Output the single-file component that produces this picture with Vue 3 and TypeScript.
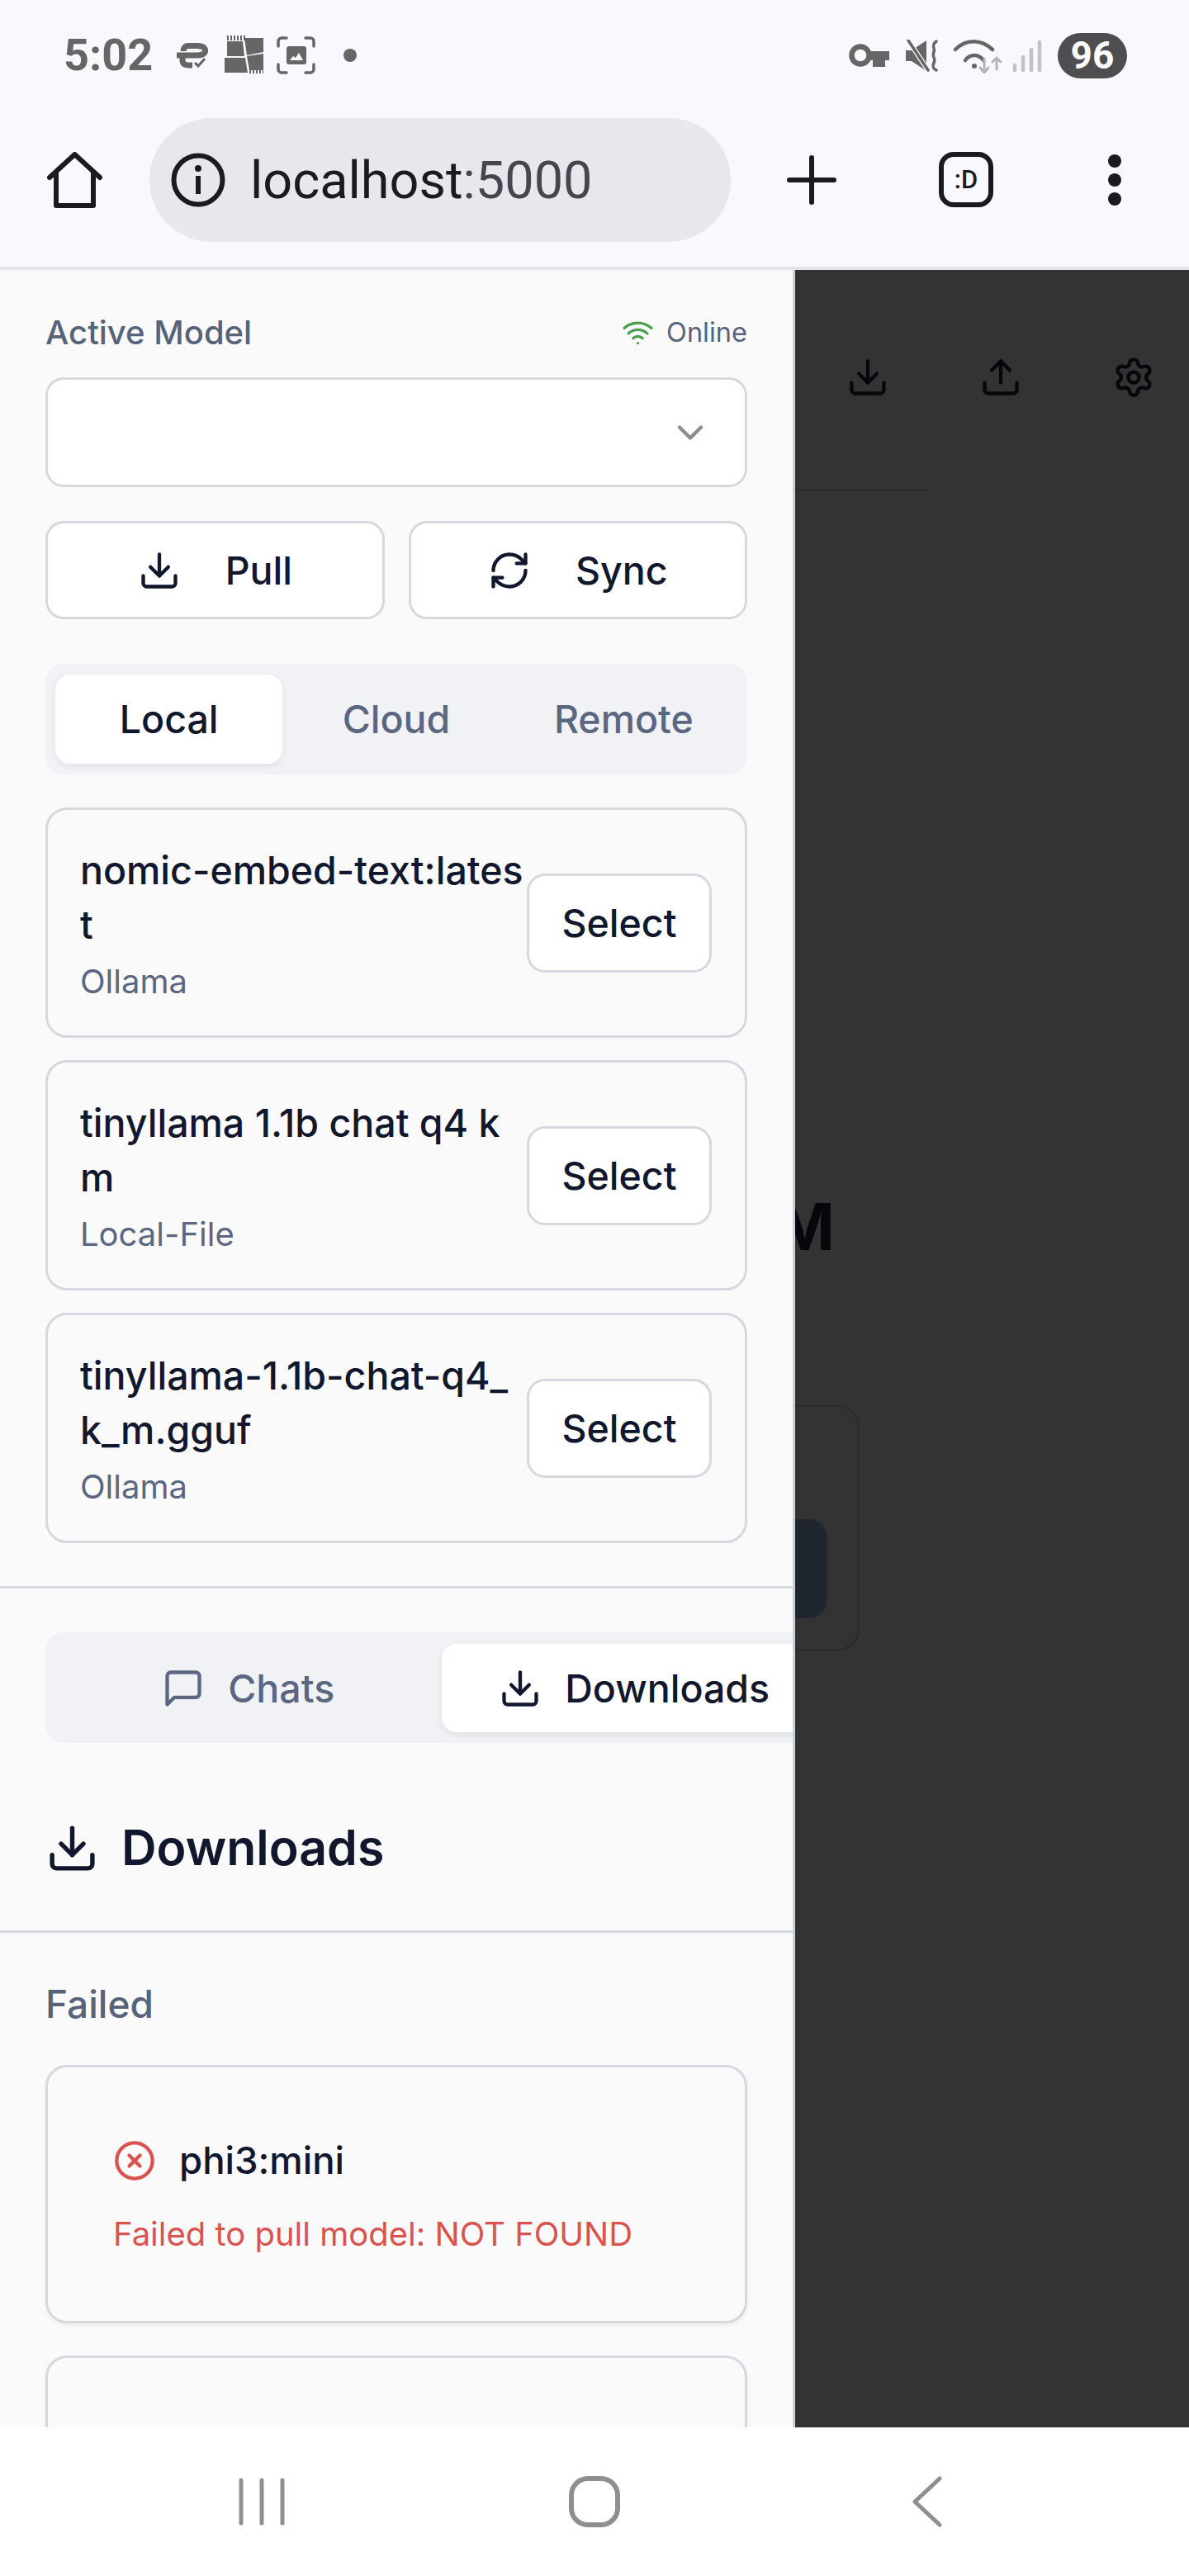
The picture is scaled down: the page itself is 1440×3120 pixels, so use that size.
<script setup lang="ts">
interface Model {
  name: string;
  source: string;
}

const models: Model[] = [
  { name: 'nomic-embed-text:latest', source: 'Ollama' },
  { name: 'tinyllama 1.1b chat q4 k m', source: 'Local-File' },
  { name: 'tinyllama-1.1b-chat-q4_k_m.gguf', source: 'Ollama' },
];

const sourceTabs = ['Local', 'Cloud', 'Remote'];
const activeSource = 'Local';
</script>

<template>
  <div class="phone">
    <div class="status-bar">
      <div class="status-left">
        <span class="time">5:02</span>
        <svg class="st-sync" viewBox="0 0 39 31" fill="none" stroke="#666" stroke-width="7">
          <path d="M1 15H26C34 15 37 11 35 7C33 3 27 3.500 23 3.500H15C11 3.500 9 6 9 10" />
          <path d="M8 17V21C8 26 12 27 15 27H20" />
          <path d="M23 24l4 4 8-9" stroke-width="3" />
        </svg>
        <svg class="st-cloth" viewBox="0 0 47 48" fill="#666">
          <path d="M3 7H22L24 25H3Z" />
          <path d="M24 3H47V20L27 24Z" />
          <path d="M0 27H25L28 45H0Z" />
          <path d="M27 25L47 22V42H30Z" />
          <path d="M3 3H26M30 43H47M1 27V45M44 4V20" fill="none" stroke="#666" stroke-width="6" stroke-dasharray="2 2" />
        </svg>
        <svg class="st-capture" viewBox="0 0 47 46" fill="none" stroke="#666" stroke-width="3.5" stroke-linecap="round">
          <path d="M2 12V6a4 4 0 0 1 4-4h6M35 2h6a4 4 0 0 1 4 4v6M45 34v6a4 4 0 0 1-4 4h-6M12 44H6a4 4 0 0 1-4-4v-6" />
          <rect x="12" y="12" width="24" height="22" rx="3" fill="#666" stroke="none" />
          <path d="M16 29l4-5 3 2 4-6 5 9z" fill="#faf8ff" stroke="none" />
        </svg>
        <span class="st-dot"></span>
      </div>
      <div class="status-right">
        <svg class="st-key" viewBox="0 0 49 29" fill="#666">
          <circle cx="14" cy="14" r="10.5" fill="none" stroke="#666" stroke-width="6.5" />
          <path d="M23 9H49V20H44V28H29V20H23Z" />
        </svg>
        <svg class="st-mute" viewBox="0 0 39 39" fill="none" stroke="#666" stroke-linecap="round">
          <path d="M0 13H7L25 1V38L7 26H0Z" fill="#666" stroke="none" stroke-linejoin="round" />
          <path d="M3 1L27 37" stroke="#faf8ff" stroke-width="6" />
          <path d="M3 1L27 37" stroke-width="3.5" />
          <path d="M37 2C30 7 36 11 34 15C31 20 37 23 34 28C32 33 33 35 37 37" stroke-width="3.5" />
        </svg>
        <svg class="st-wifi" viewBox="0 0 58 43" fill="none" stroke="#666" stroke-width="4.5" stroke-linecap="round">
          <path d="M2 14C15 1 33 1 47 14" />
          <path d="M14 27C20 19 30 19 36 27" />
          <circle cx="25" cy="34" r="3" fill="#666" stroke="none" />
          <path d="M37 25V41M32 36l5 6 5-6" stroke="#b5b5b8" stroke-width="3" />
          <path d="M52 38V24M47 29l5-5 5 5" stroke="#b5b5b8" stroke-width="3" />
        </svg>
        <svg class="st-signal" viewBox="0 0 36 39" fill="none" stroke="#c2c2c6" stroke-width="4.5" stroke-linecap="round">
          <path d="M3 31V37M13 21V37M23 12V37M33 3V37" />
        </svg>
        <span class="battery">96</span>
      </div>
    </div>

    <div class="toolbar">
      <svg class="tb-home" viewBox="0 0 67 68" fill="none" stroke="#1a1b20" stroke-width="6" stroke-linejoin="round" stroke-linecap="round">
        <path d="M3 31L33.5 3L64 31" />
        <path d="M11 25V65H56V25" />
      </svg>
      <div class="url-pill">
        <svg class="tb-info" viewBox="0 0 66 66" fill="none" stroke="#1a1b20" stroke-width="6">
          <circle cx="33" cy="33" r="29.5" />
          <path d="M33 28V50" />
          <circle cx="33" cy="19" r="4" fill="#1a1b20" stroke="none" />
        </svg>
        <span class="url"><span class="url-host">localhost</span>:5000</span>
      </div>
      <svg class="tb-plus" viewBox="0 0 60 60" fill="none" stroke="#1a1b20" stroke-width="6" stroke-linecap="round">
        <path d="M30 3V57M3 30H57" />
      </svg>
      <div class="tb-tabs">:D</div>
      <div class="tb-menu">
        <span></span>
        <span></span>
        <span></span>
      </div>
    </div>

    <div class="main">
      <aside class="drawer">
        <section class="model-section">
          <div class="model-head">
            <span class="model-label">Active Model</span>
            <span class="online">
              <svg class="icon-online" viewBox="0 0 24 24" fill="none" stroke="#4a9f4f" stroke-width="2" stroke-linecap="round" stroke-linejoin="round">
                <path d="M12 20h.01" />
                <path d="M2 8.82a15 15 0 0 1 20 0" />
                <path d="M5 12.859a10 10 0 0 1 14 0" />
                <path d="M8.5 16.429a5 5 0 0 1 7 0" />
              </svg>
              Online
            </span>
          </div>

          <div class="model-select">
            <svg class="chevron" viewBox="0 0 24 24" fill="none" stroke="#8b8d93" stroke-width="2" stroke-linecap="round" stroke-linejoin="round">
              <path d="m6 9 6 6 6-6" />
            </svg>
          </div>

          <div class="action-row">
            <button class="action-btn">
              <svg class="icon" viewBox="0 0 24 24" fill="none" stroke="currentColor" stroke-width="2" stroke-linecap="round" stroke-linejoin="round">
                <path d="M21 15v4a2 2 0 0 1-2 2H5a2 2 0 0 1-2-2v-4" />
                <polyline points="7 10 12 15 17 10" />
                <line x1="12" y1="15" x2="12" y2="3" />
              </svg>
              Pull
            </button>
            <button class="action-btn">
              <svg class="icon" viewBox="0 0 24 24" fill="none" stroke="currentColor" stroke-width="2" stroke-linecap="round" stroke-linejoin="round">
                <path d="M3 12a9 9 0 0 1 9-9 9.75 9.75 0 0 1 6.74 2.74L21 8" />
                <path d="M21 3v5h-5" />
                <path d="M21 12a9 9 0 0 1-9 9 9.75 9.75 0 0 1-6.74-2.74L3 16" />
                <path d="M8 16H3v5" />
              </svg>
              Sync
            </button>
          </div>

          <div class="source-tabs">
            <div
              v-for="tab in sourceTabs"
              :key="tab"
              class="source-tab"
              :class="{ active: tab === activeSource }"
            >
              {{ tab }}
            </div>
          </div>

          <div class="model-list">
            <div v-for="model in models" :key="model.name" class="model-card">
              <div class="model-info">
                <div class="model-name">{{ model.name }}</div>
                <div class="model-source">{{ model.source }}</div>
              </div>
              <button class="select-btn">Select</button>
            </div>
          </div>
        </section>

        <div class="view-tabs">
          <div class="view-tab">
            <svg class="icon" viewBox="0 0 24 24" fill="none" stroke="currentColor" stroke-width="2" stroke-linecap="round" stroke-linejoin="round">
              <path d="M21 15a2 2 0 0 1-2 2H7l-4 4V5a2 2 0 0 1 2-2h14a2 2 0 0 1 2 2z" />
            </svg>
            Chats
          </div>
          <div class="view-tab active">
            <svg class="icon" viewBox="0 0 24 24" fill="none" stroke="currentColor" stroke-width="2" stroke-linecap="round" stroke-linejoin="round">
              <path d="M21 15v4a2 2 0 0 1-2 2H5a2 2 0 0 1-2-2v-4" />
              <polyline points="7 10 12 15 17 10" />
              <line x1="12" y1="15" x2="12" y2="3" />
            </svg>
            Downloads
          </div>
        </div>

        <h2 class="downloads-title">
          <svg class="icon-title" viewBox="0 0 24 24" fill="none" stroke="currentColor" stroke-width="2" stroke-linecap="round" stroke-linejoin="round">
            <path d="M21 15v4a2 2 0 0 1-2 2H5a2 2 0 0 1-2-2v-4" />
            <polyline points="7 10 12 15 17 10" />
            <line x1="12" y1="15" x2="12" y2="3" />
          </svg>
          Downloads
        </h2>

        <section class="failed-section">
          <div class="failed-label">Failed</div>
          <div class="failed-card">
            <div class="failed-name">
              <svg class="icon" viewBox="0 0 24 24" fill="none" stroke="#d9534f" stroke-width="2" stroke-linecap="round" stroke-linejoin="round">
                <circle cx="12" cy="12" r="10" />
                <path d="m15 9-6 6" />
                <path d="m9 9 6 6" />
              </svg>
              phi3:mini
            </div>
            <div class="failed-error">Failed to pull model: NOT FOUND</div>
          </div>
          <div class="failed-card next"></div>
        </section>
      </aside>

      <div class="backdrop">
        <div class="page-actions">
          <svg class="icon" viewBox="0 0 24 24" fill="none" stroke="currentColor" stroke-width="2" stroke-linecap="round" stroke-linejoin="round">
            <path d="M21 15v4a2 2 0 0 1-2 2H5a2 2 0 0 1-2-2v-4" />
            <polyline points="7 10 12 15 17 10" />
            <line x1="12" y1="15" x2="12" y2="3" />
          </svg>
          <svg class="icon" viewBox="0 0 24 24" fill="none" stroke="currentColor" stroke-width="2" stroke-linecap="round" stroke-linejoin="round">
            <path d="M21 15v4a2 2 0 0 1-2 2H5a2 2 0 0 1-2-2v-4" />
            <polyline points="17 8 12 3 7 8" />
            <line x1="12" y1="3" x2="12" y2="15" />
          </svg>
          <svg class="icon" viewBox="0 0 24 24" fill="none" stroke="currentColor" stroke-width="2" stroke-linecap="round" stroke-linejoin="round">
            <path d="M9.671 4.136a2.34 2.34 0 0 1 4.659 0 2.34 2.34 0 0 0 3.319 1.915 2.34 2.34 0 0 1 2.33 4.033 2.34 2.34 0 0 0 0 3.831 2.34 2.34 0 0 1-2.33 4.033 2.34 2.34 0 0 0-3.319 1.915 2.34 2.34 0 0 1-4.659 0 2.34 2.34 0 0 0-3.32-1.915 2.34 2.34 0 0 1-2.33-4.033 2.34 2.34 0 0 0 0-3.831A2.34 2.34 0 0 1 6.35 6.051a2.34 2.34 0 0 0 3.32-1.915" />
            <circle cx="12" cy="12" r="3" />
          </svg>
        </div>
        <div class="page-rule"></div>
        <h1 class="page-title">LLM</h1>
        <div class="page-card">
          <div class="page-button"></div>
        </div>
      </div>
    </div>

    <div class="nav-bar">
      <svg class="nav-recents" viewBox="0 0 56 58" fill="none" stroke="#8f8f8f" stroke-width="5" stroke-linecap="round">
        <path d="M3 3V55M28 3V55M53 3V55" />
      </svg>
      <svg class="nav-home" viewBox="0 0 62 62" fill="none" stroke="#8f8f8f" stroke-width="6">
        <rect x="3" y="3" width="56" height="56" rx="20" />
      </svg>
      <svg class="nav-back" viewBox="0 0 36 62" fill="none" stroke="#8f8f8f" stroke-width="5" stroke-linecap="round" stroke-linejoin="round">
        <path d="M33 3L3 31L33 59" />
      </svg>
    </div>
  </div>
</template>

<style scoped>
.phone {
  width: 1440px;
  height: 3120px;
  display: flex;
  flex-direction: column;
  overflow: hidden;
  background: #faf8ff;
  color: #11172c;
  font-family: Inter, "Liberation Sans", sans-serif;
}

.status-bar {
  height: 134px;
  display: flex;
  align-items: center;
  justify-content: space-between;
  padding: 0 75px 0 77px;
  flex-shrink: 0;
}

.status-left,
.status-right {
  display: flex;
  align-items: center;
}

.time {
  font-family: Roboto, sans-serif;
  font-size: 54px;
  font-weight: 700;
  color: #666;
  width: 107px;
  line-height: 54px;
}

.st-sync { width: 39px; height: 31px; margin-left: 29px; }
.st-cloth { width: 47px; height: 48px; margin-left: 20px; }
.st-capture { width: 47px; height: 46px; margin-left: 16px; }
.st-dot {
  width: 16px;
  height: 16px;
  border-radius: 50%;
  background: #666;
  margin-left: 34px;
}

.st-key { width: 49px; height: 29px; }
.st-mute { width: 39px; height: 39px; margin-left: 20px; }
.st-wifi { width: 58px; height: 43px; margin-left: 19px; }
.st-signal { width: 36px; height: 39px; margin-left: 13px; }

.battery {
  width: 84px;
  height: 55px;
  margin-left: 19px;
  border-radius: 28px;
  background: #4e4e50;
  color: #fff;
  font-family: Roboto, sans-serif;
  font-size: 46px;
  font-weight: 700;
  line-height: 55px;
  text-align: center;
}

.toolbar {
  height: 189px;
  border-bottom: 4px solid #e4e2ea;
  display: flex;
  align-items: flex-start;
  padding-left: 57px;
  flex-shrink: 0;
}

.tb-home { width: 67px; height: 68px; margin-top: 50px; }

.url-pill {
  width: 704px;
  height: 150px;
  margin: 9px 0 0 57px;
  border-radius: 75px;
  background: #e7e7ec;
  display: flex;
  align-items: center;
  padding-left: 26px;
  box-sizing: border-box;
}

.tb-info { width: 66px; height: 66px; }

.url {
  margin-left: 30px;
  font-family: Roboto, sans-serif;
  font-size: 63px;
  color: #46464f;
}

.url-host { color: #1a1b20; }

.tb-plus { width: 60px; height: 60px; margin: 54px 0 0 68px; }

.tb-tabs {
  width: 66px;
  height: 67px;
  margin: 50px 0 0 124px;
  border: 6px solid #1a1b20;
  border-radius: 18px;
  box-sizing: border-box;
  display: flex;
  align-items: center;
  justify-content: center;
  font-family: Roboto, sans-serif;
  font-size: 31px;
  font-weight: 500;
  color: #1a1b20;
}

.tb-menu {
  margin: 53px 0 0 139px;
  display: flex;
  flex-direction: column;
  gap: 7px;
}

.tb-menu span {
  width: 16px;
  height: 16px;
  border-radius: 50%;
  background: #1a1b20;
}

.main {
  flex: 1;
  min-height: 0;
  display: flex;
  overflow: hidden;
}

.drawer {
  width: 963px;
  flex-shrink: 0;
  box-sizing: border-box;
  overflow: hidden;
  background: #fafafa;
  border-right: 3px solid #cdd0d8;
}

.model-section {
  padding: 52px 55px 52px;
  border-bottom: 3px solid #d6d8e0;
}

.model-head {
  height: 46px;
  display: flex;
  align-items: center;
  justify-content: space-between;
}

.model-label {
  font-size: 40px;
  font-weight: 500;
  color: #566378;
}

.online {
  display: flex;
  align-items: center;
  gap: 15px;
  font-size: 32.5px;
  color: #566378;
}

.icon-online { width: 39px; height: 39px; }

.model-select {
  height: 133px;
  margin-top: 32px;
  box-sizing: border-box;
  border: 3px solid #d6d8e0;
  border-radius: 22px;
  background: #fff;
  display: flex;
  align-items: center;
  justify-content: flex-end;
  padding-right: 40px;
}

.chevron { width: 52px; height: 52px; }

.action-row {
  display: flex;
  gap: 29px;
  margin-top: 41px;
}

.action-btn {
  flex: 1;
  height: 119px;
  box-sizing: border-box;
  border: 3px solid #d6d8e0;
  border-radius: 22px;
  background: #fff;
  color: #11172c;
  font-family: inherit;
  font-size: 46.5px;
  font-weight: 500;
  display: flex;
  align-items: center;
  justify-content: center;
  gap: 54px;
}

.icon { width: 52px; height: 52px; flex-shrink: 0; }

.source-tabs {
  height: 134px;
  margin-top: 54px;
  box-sizing: border-box;
  padding: 13px 12px;
  border-radius: 22px;
  background: #f1f2f6;
  display: grid;
  grid-template-columns: repeat(3, 1fr);
}

.source-tab {
  display: flex;
  align-items: center;
  justify-content: center;
  border-radius: 18px;
  font-size: 46.5px;
  font-weight: 500;
  color: #5b6780;
}

.source-tab.active {
  background: #fff;
  color: #11172c;
  box-shadow: 0 3px 8px rgba(15, 23, 42, 0.08);
}

.model-list {
  margin-top: 40px;
  display: flex;
  flex-direction: column;
  gap: 27px;
}

.model-card {
  height: 279px;
  box-sizing: border-box;
  border: 3px solid #d6d8e0;
  border-radius: 26px;
  padding: 0 40px 0 39px;
  display: flex;
  align-items: center;
}

.model-info {
  flex: 1;
  min-width: 0;
}

.model-name {
  font-size: 46.5px;
  font-weight: 500;
  line-height: 66px;
  word-break: break-all;
}

.model-source {
  margin-top: 10px;
  font-size: 40px;
  line-height: 52px;
  color: #5b6780;
}

.select-btn {
  width: 224px;
  height: 120px;
  flex-shrink: 0;
  border: 3px solid #d6d8e0;
  border-radius: 22px;
  background: #fff;
  color: #11172c;
  font-family: inherit;
  font-size: 46.5px;
  font-weight: 500;
}

.view-tabs {
  width: 959px;
  height: 134px;
  margin: 53px 0 0 55px;
  box-sizing: border-box;
  padding: 14px 12px 13px;
  border-radius: 22px;
  background: #f1f2f6;
  display: grid;
  grid-template-columns: 1fr 1fr;
}

.view-tab {
  display: flex;
  align-items: center;
  justify-content: center;
  gap: 28px;
  border-radius: 18px;
  font-size: 46.5px;
  font-weight: 500;
  color: #5b6780;
}

.view-tab.active {
  background: #fff;
  color: #11172c;
  box-shadow: 0 3px 8px rgba(15, 23, 42, 0.08);
}

.downloads-title {
  margin: 0;
  padding: 88px 55px 61px;
  border-bottom: 3px solid #d6d8e0;
  display: flex;
  align-items: center;
  gap: 27px;
  font-size: 59px;
  font-weight: 600;
  line-height: 78px;
}

.icon-title { width: 65px; height: 65px; }

.failed-section { padding: 54px 55px 0; }

.failed-label {
  font-size: 46px;
  font-weight: 500;
  line-height: 65px;
  color: #566378;
}

.failed-card {
  height: 313px;
  margin-top: 41px;
  box-sizing: border-box;
  border: 3px solid #d6d8e0;
  border-radius: 26px;
  padding: 80px 79px 0;
  box-shadow: 0 3px 6px rgba(15, 23, 42, 0.05);
}

.failed-card.next {
  margin-top: 39px;
}

.failed-name {
  display: flex;
  align-items: center;
  gap: 28px;
  font-size: 45.5px;
  font-weight: 500;
  line-height: 65px;
}

.failed-error {
  margin-top: 31px;
  font-size: 40px;
  line-height: 52px;
  color: #d9534f;
}

.backdrop {
  flex: 1;
  min-width: 0;
  background: #333;
  color: #05070c;
  overflow: hidden;
}

.page-actions {
  height: 260px;
  display: flex;
  align-items: center;
  justify-content: flex-end;
  gap: 109px;
  padding-right: 41px;
}

.page-rule {
  width: 163px;
  height: 3px;
  margin-top: 5px;
  background: #2b2c2e;
}

.page-title {
  width: 248px;
  margin: 844px 0 0 -200px;
  font-size: 78px;
  font-weight: 700;
  line-height: 94px;
  text-align: right;
  white-space: nowrap;
}

.page-card {
  width: 178px;
  height: 299px;
  margin: 168px 0 0 -100px;
  box-sizing: border-box;
  border: 3px solid #2b2c2e;
  border-radius: 26px;
  padding: 136px 36px 0 0;
}

.page-button {
  height: 120px;
  border-radius: 22px;
  background: #1f2630;
}

.nav-bar {
  height: 180px;
  flex-shrink: 0;
  background: #fff;
  display: grid;
  grid-template-columns: repeat(3, 403px);
  justify-content: center;
  justify-items: center;
  align-items: center;
}

.nav-recents { width: 56px; height: 58px; }
.nav-home { width: 62px; height: 62px; }
.nav-back { width: 36px; height: 62px; }
</style>

<style>
html, body { margin: 0; padding: 0; }
</style>
